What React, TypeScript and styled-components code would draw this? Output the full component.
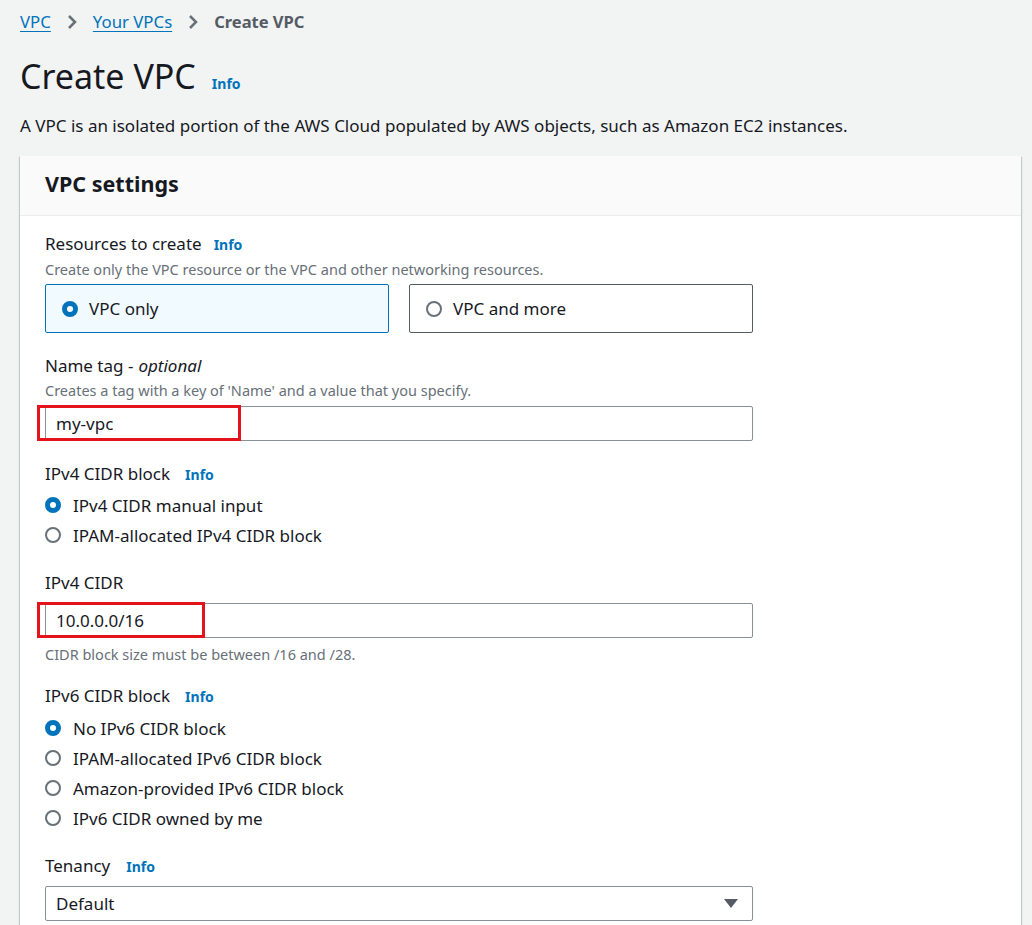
import React from "react";
import styled, { createGlobalStyle } from "styled-components";

const Global = createGlobalStyle`
  html, body { margin: 0; padding: 0; overflow: hidden; height: 925px; }
  body { background: #f2f3f3; font-family: "Noto Sans", "Open Sans", sans-serif; color: #16191f; }
  * { box-sizing: border-box; }
`;

const Page = styled.div`
  padding: 12px 0 0 20px;
`;

const Breadcrumbs = styled.nav`
  display: flex;
  align-items: center;
  gap: 16px;
  height: 20px;
  font-size: 16.8px;
  line-height: 20px;
`;

const Crumb = styled.a`
  color: #0073bb;
  text-decoration: underline;
  text-underline-offset: 3px;
  cursor: pointer;
`;

const Current = styled.span`
  color: #545b64;
  font-weight: 700;
  font-size: 16.5px;
`;

const Title = styled.h1`
  margin: 24px 0 0;
  height: 40px;
  display: flex;
  align-items: baseline;
  gap: 16px;
  font-size: 34px;
  line-height: 40px;
  font-weight: 400;
  color: #16191f;
`;

const Info = styled.a<{ $gap?: number }>`
  color: #0073bb;
  font-weight: 700;
  font-size: 14px;
  line-height: 1;
  margin-left: ${(p) => p.$gap ?? 0}px;
  cursor: pointer;
`;

const Description = styled.p`
  margin: 19px 0 0;
  font-size: 17px;
  line-height: 22px;
`;

const Card = styled.section`
  margin-top: 19px;
  width: 1001px;
  background: #fff;
  box-shadow: 0 1px 1px 0 rgba(0, 28, 36, 0.3), 1px 1px 1px 0 rgba(0, 28, 36, 0.15),
    -1px 1px 1px 0 rgba(0, 28, 36, 0.15);
`;

const CardHeader = styled.header`
  background: #fafafa;
  border-bottom: 1px solid #eaeded;
  padding: 14px 25px 17px;
  font-size: 21.5px;
  line-height: 28px;
  font-weight: 700;
`;

const CardBody = styled.div`
  padding: 17px 25px 40px;
  width: 758px;
`;

const Field = styled.div<{ $first?: boolean }>`
  margin-top: ${(p) => (p.$first ? 0 : 22)}px;
`;

const Label = styled.div`
  font-size: 17px;
  line-height: 22px;
  height: 22px;
  display: flex;
  align-items: baseline;
`;

const Optional = styled.i`
  margin-left: 5px;
`;

const Hint = styled.div<{ $top?: number }>`
  margin-top: ${(p) => p.$top ?? 4}px;
  font-size: 14.5px;
  line-height: 18px;
  color: #687078;
`;

const TileRow = styled.div`
  margin-top: 6px;
  display: grid;
  grid-template-columns: 344px 344px;
  gap: 20px;
`;

const Tile = styled.div<{ $selected?: boolean }>`
  height: 49px;
  display: flex;
  align-items: center;
  gap: 11px;
  padding: 0 16px;
  border: 1px solid ${(p) => (p.$selected ? "#0073bb" : "#545b64")};
  background: ${(p) => (p.$selected ? "#f1faff" : "#fff")};
  border-radius: 2px;
  font-size: 17px;
`;

const Radio = styled.span<{ $checked?: boolean }>`
  width: 16px;
  height: 16px;
  border-radius: 50%;
  flex: none;
  background: #fff;
  border: ${(p) => (p.$checked ? "5px solid #0073bb" : "2px solid #687078")};
`;

const RadioGroup = styled.div<{ $top?: number }>`
  margin-top: ${(p) => p.$top ?? 5}px;
  display: flex;
  flex-direction: column;
`;

const RadioRow = styled.div`
  height: 30px;
  display: flex;
  align-items: center;
  gap: 12px;
  font-size: 17px;
`;

const InputWrap = styled.div<{ $top?: number }>`
  position: relative;
  margin-top: ${(p) => p.$top ?? 7}px;
`;

const Input = styled.div`
  height: 35px;
  border: 1px solid #879196;
  border-radius: 2px;
  padding: 0 10px;
  display: flex;
  align-items: center;
  justify-content: space-between;
  font-size: 17px;
  background: #fff;
`;

const Highlight = styled.div<{ $width: number }>`
  position: absolute;
  left: -8px;
  top: -1px;
  width: ${(p) => p.$width}px;
  height: 36px;
  border: 3px solid #e3121b;
  pointer-events: none;
`;

const Caret = styled.span`
  width: 0;
  height: 0;
  border-left: 7px solid transparent;
  border-right: 7px solid transparent;
  border-top: 9px solid #545b64;
  margin-right: 4px;
`;

const Chevron = () => (
  <svg width="10" height="16" viewBox="0 0 10 16" aria-hidden>
    <path d="M2 2 L8 8 L2 14" fill="none" stroke="#687078" strokeWidth="2.5" />
  </svg>
);

export default function App() {
  return (
    <>
      <Global />
      <Page>
        <Breadcrumbs>
          <Crumb>VPC</Crumb>
          <Chevron />
          <Crumb>Your VPCs</Crumb>
          <Chevron />
          <Current>Create VPC</Current>
        </Breadcrumbs>
        <Title>
          Create VPC <Info>Info</Info>
        </Title>
        <Description>
          A VPC is an isolated portion of the AWS Cloud populated by AWS objects, such as Amazon EC2 instances.
        </Description>
        <Card>
          <CardHeader>VPC settings</CardHeader>
          <CardBody>
            <Field $first>
              <Label>
                Resources to create <Info $gap={12}>Info</Info>
              </Label>
              <Hint $top={5}>Create only the VPC resource or the VPC and other networking resources.</Hint>
              <TileRow>
                <Tile $selected>
                  <Radio $checked />
                  VPC only
                </Tile>
                <Tile>
                  <Radio />
                  VPC and more
                </Tile>
              </TileRow>
            </Field>

            <Field>
              <Label>
                Name tag -<Optional>optional</Optional>
              </Label>
              <Hint>Creates a tag with a key of 'Name' and a value that you specify.</Hint>
              <InputWrap>
                <Input>my-vpc</Input>
                <Highlight $width={204} />
              </InputWrap>
            </Field>

            <Field>
              <Label>
                IPv4 CIDR block <Info $gap={15}>Info</Info>
              </Label>
              <RadioGroup>
                <RadioRow>
                  <Radio $checked />
                  IPv4 CIDR manual input
                </RadioRow>
                <RadioRow>
                  <Radio />
                  IPAM-allocated IPv4 CIDR block
                </RadioRow>
              </RadioGroup>
            </Field>

            <Field>
              <Label>IPv4 CIDR</Label>
              <InputWrap $top={9}>
                <Input>10.0.0.0/16</Input>
                <Highlight $width={168} />
              </InputWrap>
              <Hint $top={7}>CIDR block size must be between /16 and /28.</Hint>
            </Field>

            <Field>
              <Label>
                IPv6 CIDR block <Info $gap={15}>Info</Info>
              </Label>
              <RadioGroup $top={6}>
                <RadioRow>
                  <Radio $checked />
                  No IPv6 CIDR block
                </RadioRow>
                <RadioRow>
                  <Radio />
                  IPAM-allocated IPv6 CIDR block
                </RadioRow>
                <RadioRow>
                  <Radio />
                  Amazon-provided IPv6 CIDR block
                </RadioRow>
                <RadioRow>
                  <Radio />
                  IPv6 CIDR owned by me
                </RadioRow>
              </RadioGroup>
            </Field>

            <Field>
              <Label>
                Tenancy <Info $gap={16}>Info</Info>
              </Label>
              <InputWrap $top={9}>
                <Input>
                  Default
                  <Caret />
                </Input>
              </InputWrap>
            </Field>
          </CardBody>
        </Card>
      </Page>
    </>
  );
}
